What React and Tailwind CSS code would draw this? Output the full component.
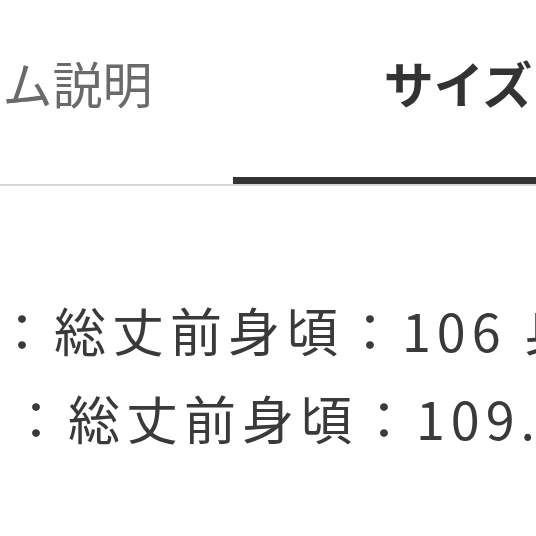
export default function App() {
  const font = { fontFamily: '"Noto Sans CJK JP", "Noto Sans", sans-serif' };
  return (
    <div className="w-[536px] h-[536px] overflow-hidden bg-white" style={font}>
      <div className="-ml-[233px] w-[932px] flex border-b-2 border-[#d6d6d6]">
        <div className="w-[466px] h-[184px] flex justify-center pt-[57px] pl-[10px]">
          <span className="text-[50px] leading-none text-[#6a6a6a]">アイテム説明</span>
        </div>
        <div className="w-[466px] h-[184px] flex justify-center pt-[57px] pr-[16px] border-b-[7px] border-[#333333]">
          <span className="text-[50px] leading-none font-bold text-[#333333]">サイズ</span>
        </div>
      </div>
      <div className="pt-[100px] text-[52px] leading-[88px] tracking-[6px] text-[#3a3a3a] whitespace-nowrap">
        <div className="-ml-[4px]">：総丈前身頃：106 身幅：52</div>
        <div className="ml-[10px]">：総丈前身頃：109.5 身幅：55</div>
      </div>
    </div>
  );
}
